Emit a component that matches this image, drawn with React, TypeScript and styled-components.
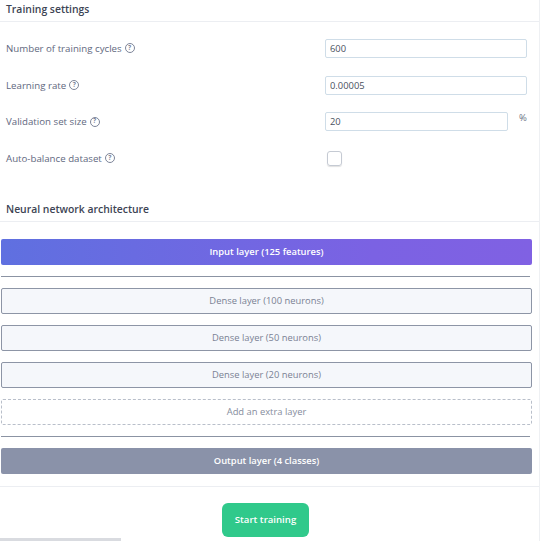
import React from 'react'
import styled, { createGlobalStyle } from 'styled-components'

const GlobalStyle = createGlobalStyle`
  html, body {
    margin: 0;
    padding: 0;
    background: #fff;
    overflow: hidden;
  }
  body {
    font-family: 'Open Sans', 'Noto Sans', sans-serif;
  }
`

const Panel = styled.div`
  width: 540px;
  height: 541px;
  border-right: 1px solid #eef0f3;
  box-sizing: border-box;
`

const SectionTitle = styled.div<{ $top?: number }>`
  height: 22px;
  box-sizing: border-box;
  padding: 2px 6px 0;
  font-size: 10.4px;
  font-weight: 600;
  color: #3d4454;
  border-bottom: 1px solid #eceef2;
  margin-top: ${(p) => p.$top ?? 0}px;
`

const Form = styled.div`
  padding-top: 8px;
`

const Row = styled.div`
  display: grid;
  grid-template-columns: 319px 1fr;
  align-items: center;
  height: 36.7px;
  padding-left: 6px;
`

const Label = styled.label`
  font-size: 9.7px;
  color: #5f6880;
  display: flex;
  align-items: center;
  gap: 3px;
`

const Help = styled.span`
  display: inline-flex;
  align-items: center;
  justify-content: center;
  width: 8px;
  height: 8px;
  border: 1px solid #7d8599;
  border-radius: 50%;
  font-size: 6.5px;
  font-weight: 700;
  color: #7d8599;
  line-height: 1;
`

const Field = styled.div`
  display: flex;
  align-items: center;
`

const Input = styled.input<{ $w: number }>`
  width: ${(p) => p.$w}px;
  height: 19px;
  box-sizing: border-box;
  border: 1px solid #cfdde8;
  border-radius: 2px;
  padding: 0 4px;
  font-family: inherit;
  font-size: 9.4px;
  color: #4a5160;
  outline: none;
`

const Unit = styled.span`
  margin-left: 11px;
  margin-top: -8px;
  font-size: 9.5px;
  color: #6b7385;
`

const Check = styled.span`
  width: 13px;
  height: 13px;
  margin-left: 2px;
  border: 1px solid #c5cad3;
  border-radius: 3px;
  box-shadow: 0 1px 1px rgba(0, 0, 0, 0.12);
`

const Layers = styled.div`
  display: flex;
  flex-direction: column;
  gap: 11px;
  padding: 17px 7px 12px 1px;
  border-bottom: 1px solid #eceef2;
`

const Layer = styled.div<{ $kind: 'input' | 'dense' | 'add' | 'output' }>`
  height: 26px;
  box-sizing: border-box;
  border-radius: 2px;
  display: flex;
  align-items: center;
  justify-content: center;
  font-size: 9.4px;
  ${(p) =>
    p.$kind === 'input'
      ? `background: linear-gradient(90deg, #5f70e0, #7b62e3 70%, #8061e3);
         color: #fff; font-weight: 600;`
      : p.$kind === 'output'
      ? `background: #8a92a9; color: #fff; font-weight: 600;`
      : p.$kind === 'dense'
      ? `background: #f5f7fb; border: 1px solid #8d95a6; color: #7a8294;`
      : `background: #fff; border: 1px dashed #b9bfca; color: #868d9d;`}
`

const Divider = styled.hr`
  margin: 0 2px 0 0;
  border: 0;
  border-top: 1px solid #8b93a3;
`

const Footer = styled.div`
  display: flex;
  justify-content: center;
  padding: 16px 8px 0 0;
`

const StartButton = styled.button`
  width: 87px;
  height: 34px;
  border: 0;
  border-radius: 6px;
  background: #30c98b;
  color: #fff;
  font-family: inherit;
  font-size: 9.6px;
  font-weight: 600;
`

const ScrollThumb = styled.div`
  position: fixed;
  left: 0;
  bottom: 0;
  width: 121px;
  height: 3px;
  background: #d9dbe0;
`

const fields = [
  { label: 'Number of training cycles', value: '600', width: 202 },
  { label: 'Learning rate', value: '0.00005', width: 202 },
  { label: 'Validation set size', value: '20', width: 183, unit: '%' },
]

const denseLayers = [100, 50, 20]

export default function App() {
  return (
    <>
      <GlobalStyle />
      <Panel>
        <SectionTitle>Training settings</SectionTitle>
        <Form>
          {fields.map((f) => (
            <Row key={f.label}>
              <Label>
                {f.label} <Help>?</Help>
              </Label>
              <Field>
                <Input $w={f.width} defaultValue={f.value} />
                {f.unit && <Unit>{f.unit}</Unit>}
              </Field>
            </Row>
          ))}
          <Row>
            <Label>
              Auto-balance dataset <Help>?</Help>
            </Label>
            <Field>
              <Check />
            </Field>
          </Row>
        </Form>
        <SectionTitle $top={23}>Neural network architecture</SectionTitle>
        <Layers>
          <Layer $kind="input">Input layer (125 features)</Layer>
          <Divider />
          {denseLayers.map((n) => (
            <Layer key={n} $kind="dense">
              Dense layer ({n} neurons)
            </Layer>
          ))}
          <Layer $kind="add">Add an extra layer</Layer>
          <Divider />
          <Layer $kind="output">Output layer (4 classes)</Layer>
        </Layers>
        <Footer>
          <StartButton>Start training</StartButton>
        </Footer>
      </Panel>
      <ScrollThumb />
    </>
  )
}
